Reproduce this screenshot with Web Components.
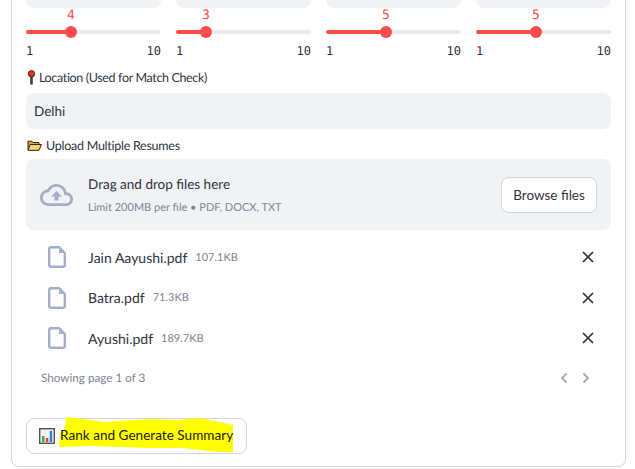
<!DOCTYPE html>
<html>
<head>
<meta charset="utf-8">
<style>
  html, body { margin: 0; height: 469px; overflow: hidden; background: #fff; }
  body { font-family: Lato, sans-serif; color: #31333f; text-rendering: geometricPrecision; }
</style>
</head>
<body>
<app-form>
  <tile-row></tile-row>
  <slider-row>
    <range-slider value="4"></range-slider>
    <range-slider value="3"></range-slider>
    <range-slider value="5"></range-slider>
    <range-slider value="5"></range-slider>
  </slider-row>
  <text-field value="Delhi">
    <svg slot="icon" width="9" height="15" viewBox="0 0 9 15">
      <path d="M4.5 6v7.5" stroke="#3f3f3f" stroke-width="2.6" stroke-linecap="round"/>
      <circle cx="4.5" cy="3.8" r="3.2" fill="#e5311c" stroke="#4a1a12" stroke-width=".9"/>
    </svg>
    Location (Used for Match Check)
  </text-field>
  <file-upload>
    <svg slot="icon" width="15" height="11" viewBox="0 0 15 11">
      <path d="M1 10V1.2h4l1 1.3h6V5" fill="#d9a63a" stroke="#2e2410" stroke-width="1"/>
      <path d="M1 10.3L3.2 4.5H14.4L12 10.3z" fill="#fdd36b" stroke="#2e2410" stroke-width="1" stroke-linejoin="round"/>
    </svg>
    Upload Multiple Resumes
  </file-upload>
  <file-row name="Jain Aayushi.pdf" size="107.1KB"></file-row>
  <file-row name="Batra.pdf" size="71.3KB"></file-row>
  <file-row name="Ayushi.pdf" size="189.7KB"></file-row>
  <file-pager text="Showing page 1 of 3"></file-pager>
  <marker-button>Rank and Generate Summary</marker-button>
</app-form>

<script>
// outer bordered form, cut off by the top of the window
class AppForm extends HTMLElement {
  constructor() {
    super();
    this.attachShadow({ mode: 'open' });
    this.shadowRoot.innerHTML = `
      <style>
        :host {
          display: block;
          box-sizing: border-box;
          width: 615px;
          height: 467px;
          margin-left: 11px;
          padding: 0 14px;
          border: 1px solid #d5d6d9;
          border-top: 0;
          border-radius: 0 0 8px 8px;
        }
      </style>
      <slot></slot>
    `;
  }
}
customElements.define('app-form', AppForm);

// bottoms of the inputs that scrolled away
class TileRow extends HTMLElement {
  constructor() {
    super();
    this.attachShadow({ mode: 'open' });
    this.shadowRoot.innerHTML = `
      <style>
        :host { display: flex; gap: 15px; height: 8px; }
        div { flex: 1; background: #f0f2f6; border-radius: 0 0 8px 8px; }
      </style>
      <div></div><div></div><div></div><div></div>
    `;
  }
}
customElements.define('tile-row', TileRow);

class SliderRow extends HTMLElement {
  constructor() {
    super();
    this.attachShadow({ mode: 'open' });
    this.shadowRoot.innerHTML = `
      <style>
        :host { display: flex; gap: 15px; height: 61px; }
        ::slotted(*) { flex: 1; }
      </style>
      <slot></slot>
    `;
  }
}
customElements.define('slider-row', SliderRow);

class RangeSlider extends HTMLElement {
  constructor() {
    super();
    this.attachShadow({ mode: 'open' });
    const value = Number(this.getAttribute('value'));
    const pct = (value - 1) / 9 * 100;
    this.shadowRoot.innerHTML = `
      <style>
        :host { display: block; font-family: "DejaVu Sans Mono", monospace; font-size: 12px; }
        .value-line { height: 16px; position: relative; }
        .value { position: absolute; left: ${pct}%; top: 0; transform: translateX(-50%); color: #ff4b4b; line-height: 16px; font-size: 13px; }
        .track { height: 4px; margin-top: 6px; border-radius: 2px; position: relative;
                 background: linear-gradient(to right, #ff4b4b ${pct}%, #e8eaf0 ${pct}%); }
        .thumb { position: absolute; left: ${pct}%; top: -4px; width: 12px; height: 12px; margin-left: -6px;
                 border-radius: 50%; background: #ff4b4b; }
        .ends { display: flex; justify-content: space-between; margin-top: 9px; line-height: 16px; }
      </style>
      <div class="value-line"><span class="value">${value}</span></div>
      <div class="track"><div class="thumb"></div></div>
      <div class="ends"><span>1</span><span>10</span></div>
    `;
  }
}
customElements.define('range-slider', RangeSlider);

class TextField extends HTMLElement {
  constructor() {
    super();
    this.attachShadow({ mode: 'open' });
    this.shadowRoot.innerHTML = `
      <style>
        :host { display: block; }
        label { display: flex; align-items: center; gap: 3px; height: 16px; font-size: 12.5px; letter-spacing: -.35px; margin-bottom: 8px; padding-left: 1px; }
        .box { height: 36px; box-sizing: border-box; padding: 0 8px; display: flex; align-items: center;
               background: #f0f2f6; border-radius: 8px; font-size: 13.5px; }
      </style>
      <label><slot name="icon"></slot><span><slot></slot></span></label>
      <div class="box">${this.getAttribute('value')}</div>
    `;
  }
}
customElements.define('text-field', TextField);

class FileUpload extends HTMLElement {
  constructor() {
    super();
    this.attachShadow({ mode: 'open' });
    this.shadowRoot.innerHTML = `
      <style>
        :host { display: block; margin-top: 8px; }
        label { display: flex; align-items: center; gap: 4px; height: 16px; font-size: 12.5px; letter-spacing: -.26px; margin-bottom: 6px; padding-left: 1px; }
        .zone { height: 71px; box-sizing: border-box; display: flex; align-items: center; padding: 0 14px;
                background: #f0f2f6; border-radius: 8px; }
        .cloud { flex: none; margin-right: 15px; }
        .text { flex: 1; padding-top: 1px; }
        .title { font-size: 13.5px; line-height: 20px; }
        .limit { font-size: 11px; line-height: 16px; color: #808495; margin-top: 6px; }
        button { font: inherit; font-size: 13.5px; color: #31333f; height: 36px; width: 96px; padding: 0;
                 background: #fff; border: 1px solid #d5d6d9; border-radius: 8px; }
      </style>
      <label><slot name="icon"></slot><span><slot></slot></span></label>
      <div class="zone">
        <svg class="cloud" width="33" height="22" viewBox="0 4 24 16">
          <path d="M19.35 10.04C18.67 6.59 15.64 4 12 4 9.11 4 6.6 5.64 5.35 8.04 2.34 8.36 0 10.91 0 14c0 3.31 2.69 6 6 6h13c2.76 0 5-2.24 5-5 0-2.64-2.05-4.78-4.65-4.96zM19 18H6c-2.21 0-4-1.79-4-4 0-2.05 1.53-3.76 3.56-3.97l1.07-.11.5-.95C8.08 7.14 9.94 6 12 6c2.62 0 4.88 1.86 5.39 4.43l.3 1.5 1.53.11c1.56.1 2.78 1.41 2.78 2.96 0 1.65-1.35 3-3 3zM8 13h2.55v3h2.9v-3H16l-4-4z" fill="#a3afc9"/>
        </svg>
        <div class="text">
          <div class="title">Drag and drop files here</div>
          <div class="limit">Limit 200MB per file • PDF, DOCX, TXT</div>
        </div>
        <button>Browse files</button>
      </div>
    `;
  }
}
customElements.define('file-upload', FileUpload);

class FileRow extends HTMLElement {
  constructor() {
    super();
    this.attachShadow({ mode: 'open' });
    this.shadowRoot.innerHTML = `
      <style>
        :host { display: flex; align-items: center; height: 40.5px; }
        :host(:first-of-type) { margin-top: 7px; }
        .doc { flex: none; margin: 0 22px 0 22px; }
        .name { font-size: 14px; }
        .size { font-size: 11px; color: #808495; margin-left: 8px; flex: 1; }
        .close { flex: none; margin-right: 17px; }
      </style>
      <svg class="doc" width="18" height="22" viewBox="0 0 18 22">
        <path d="M2.5 1.2H11l5.8 5.8V19a1.8 1.8 0 0 1-1.8 1.8H3A1.8 1.8 0 0 1 1.2 19V3A1.8 1.8 0 0 1 3 1.2z" fill="none" stroke="#a3afc9" stroke-width="2.4" stroke-linejoin="round"/>
        <path d="M11 1v6h6z" fill="#a3afc9"/>
      </svg>
      <span class="name">${this.getAttribute('name')}</span>
      <span class="size">${this.getAttribute('size')}</span>
      <svg class="close" width="12" height="12" viewBox="0 0 12 12">
        <path d="M1 1l10 10M11 1L1 11" stroke="#31333f" stroke-width="1.7"/>
      </svg>
    `;
  }
}
customElements.define('file-row', FileRow);

class FilePager extends HTMLElement {
  constructor() {
    super();
    this.attachShadow({ mode: 'open' });
    this.shadowRoot.innerHTML = `
      <style>
        :host { display: flex; align-items: center; height: 39px; margin-bottom: 1px; padding: 0 21px 0 15px; font-size: 11.7px; color: #808495; }
        span { flex: 1; }
        svg { margin-left: 14px; }
      </style>
      <span>${this.getAttribute('text')}</span>
      <svg width="8" height="12" viewBox="0 0 8 12"><path d="M6.5 1.5L2 6l4.5 4.5" fill="none" stroke="#a9abb3" stroke-width="1.8"/></svg>
      <svg width="8" height="12" viewBox="0 0 8 12"><path d="M1.5 1.5L6 6l-4.5 4.5" fill="none" stroke="#a9abb3" stroke-width="1.8"/></svg>
    `;
  }
}
customElements.define('file-pager', FilePager);

class MarkerButton extends HTMLElement {
  constructor() {
    super();
    this.attachShadow({ mode: 'open' });
    this.shadowRoot.innerHTML = `
      <style>
        :host { display: block; margin-top: 20px; }
        button { position: relative; display: flex; align-items: center; gap: 5px; width: 221px; height: 36px;
                 box-sizing: border-box; padding: 0 0 0 12px; background: #fff; color: #1d1c05;
                 font: inherit; font-size: 13.6px; border: 1px solid #d5d6d9; border-radius: 8px; }
        /* the highlighter scribble painted over the finished screenshot */
        .mark { position: absolute; left: 0; top: 0; overflow: visible; }
        span { position: relative; white-space: nowrap; margin-top: -1px; }
        .chart { position: relative; flex: none; }
      </style>
      <button>
        <svg class="mark" width="221" height="36" viewBox="0 0 221 36">
          <polygon points="39,-2 56,0 76,3 123,0 150,1 173,-1 206,6 206,33 190,33 156,29 123,29 63,27 32,28 33,14 38,9" fill="#ffff00"/>
        </svg>
        <svg class="chart" width="16" height="16" viewBox="0 0 16 16">
          <rect x=".7" y=".7" width="14.6" height="14.6" fill="#f2f2f2" stroke="#50555b" stroke-width="1.4"/>
          <rect x="3" y="8" width="2.5" height="6" fill="#3cae3c"/>
          <rect x="6.8" y="10" width="2.5" height="4" fill="#e0442c"/>
          <rect x="10.7" y="3" width="2.5" height="11" fill="#2f7fd0"/>
        </svg>
        <span><slot></slot></span>
      </button>
    `;
  }
}
customElements.define('marker-button', MarkerButton);
</script>
</body>
</html>
